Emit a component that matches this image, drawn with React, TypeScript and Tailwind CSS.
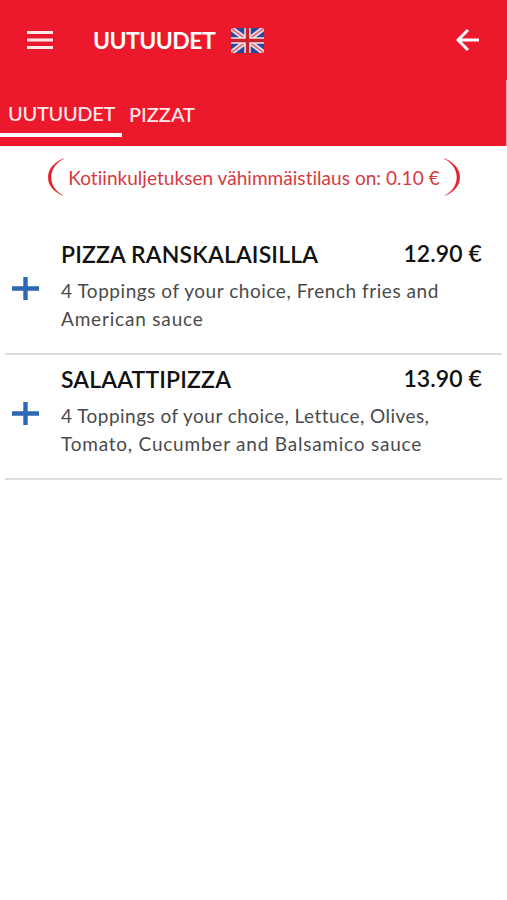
import React, { useState } from "react";

interface MenuItem {
  id: string;
  name: string;
  nameClass: string;
  price: string;
  lines: { text: string; className: string }[];
}

const tabs = [
  { id: "uutuudet", label: "UUTUUDET", className: "w-[122px] pl-2 pt-[19px] tracking-[-0.3px]" },
  { id: "pizzat", label: "PIZZAT", className: "pl-[7px] pr-2 pt-5 tracking-[0px]" },
];

const items: MenuItem[] = [
  {
    id: "ranskalaisilla",
    name: "PIZZA RANSKALAISILLA",
    nameClass: "tracking-[0.15px]",
    price: "12.90 €",
    lines: [
      { text: "4 Toppings of your choice, French fries and", className: "pt-px tracking-[0.54px]" },
      { text: "American sauce", className: "tracking-[0.82px]" },
    ],
  },
  {
    id: "salaattipizza",
    name: "SALAATTIPIZZA",
    nameClass: "tracking-[0.15px]",
    price: "13.90 €",
    lines: [
      { text: "4 Toppings of your choice, Lettuce, Olives,", className: "pt-px tracking-[0.46px]" },
      { text: "Tomato, Cucumber and Balsamico sauce", className: "tracking-[0.78px]" },
    ],
  },
];

function BritishFlag() {
  return (
    <svg viewBox="0 0 33 25" className="w-[33px] h-[25px]" aria-label="English">
      <rect width="33" height="25" fill="#234a9c" />
      <path d="M0 0L33 25M33 0L0 25" stroke="#f3dfe6" strokeWidth="5" />
      <path d="M0 0L33 25M33 0L0 25" stroke="#dc6470" strokeWidth="1.6" />
      <path d="M16.5 0V25M0 12.5H33" stroke="#f6e3e6" strokeWidth="6.4" />
      <path d="M16.5 0V25M0 12.5H33" stroke="#c9202e" strokeWidth="3.4" />
    </svg>
  );
}

function MenuRow({ item }: { item: MenuItem }) {
  return (
    <li className="flex h-[125px] mx-[5px] border-b-2 border-[#dcdcdc]">
      <button type="button" className="w-14 shrink-0 pl-[7px] pt-[47px] flex items-start" aria-label={`Lisää ${item.name}`}>
        <svg viewBox="0 0 27 23" className="w-[27px] h-[23px]">
          <path d="M0 11.5H27M13.5 0V23" stroke="#2c68b4" strokeWidth="4.4" />
        </svg>
      </button>
      <div className="flex-1 min-w-0 pt-2">
        <div className="flex justify-between pr-5 h-8 text-[23px] leading-8 font-semibold text-[#111] whitespace-nowrap">
          <h2 className={item.nameClass}>{item.name}</h2>
          <span className="-mt-px tracking-[0.1px]">{item.price}</span>
        </div>
        <div className="mt-1.5 text-[19px] leading-[28px] text-[#4a4a4a] whitespace-nowrap">
          {item.lines.map((line) => (
            <p key={line.text} className={line.className}>{line.text}</p>
          ))}
        </div>
      </div>
    </li>
  );
}

export default function App() {
  const [activeTab, setActiveTab] = useState("uutuudet");

  return (
    <div className="w-full min-h-screen bg-white overflow-hidden font-['Lato',sans-serif]">
      <header className="bg-[#eb192b] text-white">
        <div className="flex items-center h-20 pl-[27px] pr-7">
          <button type="button" aria-label="Valikko">
            <svg viewBox="0 0 26 18" className="w-[26px] h-[18px]">
              <path d="M0 1.5H26M0 9H26M0 16.5H26" stroke="#ffe9eb" strokeWidth="3" />
            </svg>
          </button>
          <h1 className="ml-10 w-[123px] text-[23px] leading-8 font-bold whitespace-nowrap tracking-[-0.55px]">UUTUUDET</h1>
          <button type="button" className="ml-[15px]">
            <BritishFlag />
          </button>
          <button type="button" className="ml-auto" aria-label="Takaisin">
            <svg viewBox="0 0 23 22" className="w-[23px] h-[22px]" fill="none" stroke="#fff" strokeWidth="3">
              <path d="M23 11H2M12 1L2 11L12 21" />
            </svg>
          </button>
        </div>
        <nav className="flex h-[66px] border-r border-[#f7a3aa] text-[20px] leading-7 font-medium text-[#ffe9eb]">
          {tabs.map((tab) => (
            <button
              key={tab.id}
              type="button"
              onClick={() => setActiveTab(tab.id)}
              className={`flex items-start h-[57px] border-b-4 ${tab.className} ${activeTab === tab.id ? "border-white" : "border-transparent"}`}
            >
              {tab.label}
            </button>
          ))}
        </nav>
      </header>

      <div className="flex items-center justify-between h-[62px] pl-12 pr-[47px] text-[#d63a3f]">
        <svg viewBox="0 0 17 38" className="w-[17px] h-[38px] shrink-0">
          <path d="M16 .5C-5 8-5 30 15 37.5C-1 29 -1 9 16 .5Z" fill="#e0222c" stroke="#e0222c" strokeWidth=".3" />
        </svg>
        <p className="pt-px text-[19px] leading-7 whitespace-nowrap tracking-[0.04px]">Kotiinkuljetuksen vähimmäistilaus on: 0.10 €</p>
        <svg viewBox="0 0 17 38" className="w-[17px] h-[38px] shrink-0">
          <path d="M1 .5C22 8 22 30 2 37.5C18 29 18 9 1 .5Z" fill="#e0222c" stroke="#e0222c" strokeWidth=".3" />
        </svg>
      </div>

      <ul className="pt-[22px]">
        {items.map((item) => (
          <MenuRow key={item.id} item={item} />
        ))}
      </ul>
    </div>
  );
}
